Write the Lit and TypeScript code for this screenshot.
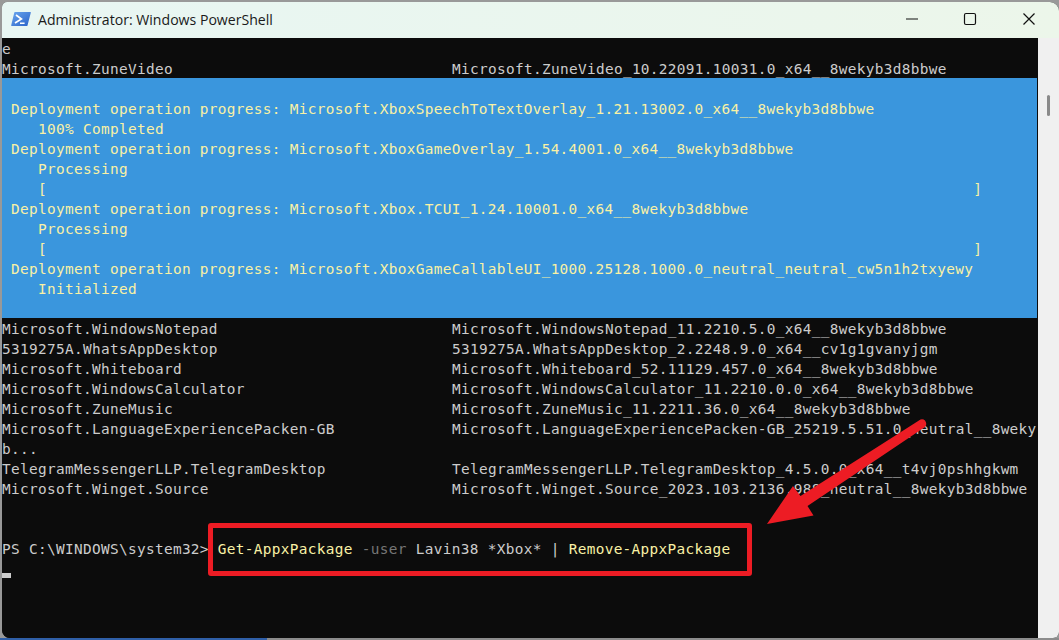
import { LitElement, html, css, svg } from "lit";
import { customElement } from "lit/decorators.js";

type Row = [string, string?];

const top: Row[] = [
  ["e"],
  ["Microsoft.ZuneVideo", "Microsoft.ZuneVideo_10.22091.10031.0_x64__8wekyb3d8bbwe"],
];
const bar = "    [" + " ".repeat(103) + "]";
const progress: string[] = [
  "",
  " Deployment operation progress: Microsoft.XboxSpeechToTextOverlay_1.21.13002.0_x64__8wekyb3d8bbwe",
  "    100% Completed",
  " Deployment operation progress: Microsoft.XboxGameOverlay_1.54.4001.0_x64__8wekyb3d8bbwe",
  "    Processing",
  bar,
  " Deployment operation progress: Microsoft.Xbox.TCUI_1.24.10001.0_x64__8wekyb3d8bbwe",
  "    Processing",
  bar,
  " Deployment operation progress: Microsoft.XboxGameCallableUI_1000.25128.1000.0_neutral_neutral_cw5n1h2txyewy",
  "    Initialized",
  "",
];
const rest: Row[] = [
  ["Microsoft.WindowsNotepad", "Microsoft.WindowsNotepad_11.2210.5.0_x64__8wekyb3d8bbwe"],
  ["5319275A.WhatsAppDesktop", "5319275A.WhatsAppDesktop_2.2248.9.0_x64__cv1g1gvanyjgm"],
  ["Microsoft.Whiteboard", "Microsoft.Whiteboard_52.11129.457.0_x64__8wekyb3d8bbwe"],
  ["Microsoft.WindowsCalculator", "Microsoft.WindowsCalculator_11.2210.0.0_x64__8wekyb3d8bbwe"],
  ["Microsoft.ZuneMusic", "Microsoft.ZuneMusic_11.2211.36.0_x64__8wekyb3d8bbwe"],
  ["Microsoft.LanguageExperiencePacken-GB", "Microsoft.LanguageExperiencePacken-GB_25219.5.51.0_neutral__8wekyb3d8bbwe"],
  ["b..."],
  ["TelegramMessengerLLP.TelegramDesktop", "TelegramMessengerLLP.TelegramDesktop_4.5.0.0_x64__t4vj0pshhgkwm"],
  ["Microsoft.Winget.Source", "Microsoft.Winget.Source_2023.103.2136.988_neutral__8wekyb3d8bbwe"],
  [""],
  [""],
];

@customElement("app-root")
export class AppRoot extends LitElement {
  static styles = css`
    :host {
      display: block;
      width: 1059px;
      height: 640px;
      overflow: hidden;
      background: linear-gradient(90deg, #2f5fa8 267px, #8c8c8c 267px) left bottom / 100% 2px no-repeat, #999999;
    }
    .win {
      position: relative;
      height: 636px;
      margin: 2px 0 0 2px;
      border-top-right-radius: 9px;
      border-bottom-right-radius: 6px;
      border-bottom-left-radius: 8px;
      border-top-left-radius: 5px;
      overflow: hidden;
      display: flex;
      flex-direction: column;
      background: #0c0c0c;
    }
    .title {
      flex: 0 0 36px;
      display: flex;
      align-items: center;
      background: linear-gradient(90deg, #e8f6f3, #ecf6ea);
    }
    .ps-icon {
      width: 20px;
      height: 16px;
      margin: 0 7px 2px 9px;
      flex: none;
    }
    .name {
      font: 14.1px/20px "Open Sans", "Noto Sans", sans-serif;
      color: #1a1a1a;
      white-space: nowrap;
    }
    .controls {
      margin: 0 1px 0 auto;
      display: flex;
      align-items: center;
      height: 100%;
    }
    .ctl {
      width: 58.5px;
      height: 100%;
      display: flex;
      align-items: center;
      justify-content: center;
    }
    .ctl svg {
      width: 14px;
      height: 14px;
      margin-bottom: 2px;
    }
    .body {
      flex: 1;
      display: flex;
      min-height: 0;
    }
    .term {
      flex: 1;
      min-width: 0;
      margin-right: 1px;
      overflow: hidden;
      font: 14.4px/22px "DejaVu Sans Mono", "Liberation Mono", monospace;
      letter-spacing: 0.33px;
      color: #cccccc;
      background: #0c0c0c;
    }
    .row {
      display: flex;
      height: 20px;
      white-space: pre;
    }
    .line {
      height: 20px;
      white-space: pre;
    }
    .col {
      flex: 0 0 450px;
    }
    .blue {
      background: #3a96dd;
      color: #f9f1a5;
    }
    .y { color: #f9f1a5; }
    .g { color: #767676; }
    .cursor {
      width: 9px;
      height: 5px;
      margin-top: 15px;
      background: #cccccc;
    }
    .scroll {
      flex: 0 0 21px;
      background: #f0f0f0;
      position: relative;
    }
    .thumb {
      position: absolute;
      left: 9px;
      top: 57px;
      width: 3px;
      height: 21px;
      border-radius: 2px;
      background: #8a8a8a;
    }
    .box {
      position: absolute;
      left: 206px;
      top: 521px;
      width: 544px;
      height: 53px;
      box-sizing: border-box;
      border: 5px solid #ed1c24;
      border-radius: 3px;
    }
    .arrow {
      position: absolute;
      left: -2px;
      top: -2px;
      width: 1059px;
      height: 640px;
      pointer-events: none;
    }
  `;

  private renderRow(r: Row) {
    return html`<div class="row"><span class="col">${r[0]}</span>${r[1] ? html`<span>${r[1]}</span>` : ""}</div>`;
  }

  render() {
    return html`
      <div class="win">
        <div class="title">
          <svg class="ps-icon" viewBox="0 0 20 16">
            <defs>
              <linearGradient id="p" x1="0" y1="0" x2="1" y2="1">
                <stop offset="0" stop-color="#6aa6ee" />
                <stop offset="1" stop-color="#2a62c8" />
              </linearGradient>
            </defs>
            <path d="M4 1H19.4Q20 1 19.8 1.8L16.5 14.4Q16.3 15 15.6 15H0.7Q0 15 0.2 14.2L3.3 1.6Q3.4 1 4 1Z" fill="url(#p)" />
            <path d="M5 4L10.4 8L4 12" fill="none" stroke="#fff" stroke-width="1.7" />
            <path d="M9 12.2H13.6" fill="none" stroke="#fff" stroke-width="1.6" />
          </svg>
          <span class="name">Administrator: Windows PowerShell</span>
          <div class="controls">
            <div class="ctl">
              <svg viewBox="0 0 14 14"><path d="M1 7H13" stroke="#111" stroke-width="1.2" /></svg>
            </div>
            <div class="ctl">
              <svg viewBox="0 0 14 14"><rect x="1.5" y="1.5" width="11" height="11" rx="1.5" fill="none" stroke="#111" stroke-width="1.2" /></svg>
            </div>
            <div class="ctl">
              <svg viewBox="0 0 14 14"><path d="M1.5 1.5L12.5 12.5M12.5 1.5L1.5 12.5" stroke="#111" stroke-width="1.2" /></svg>
            </div>
          </div>
        </div>
        <div class="body">
          <div class="term">
            ${top.map((r) => this.renderRow(r))}
            <div class="blue">
              ${progress.map((l) => html`<div class="line">${l}</div>`)}
            </div>
            ${rest.map((r) => this.renderRow(r))}
            <div class="line">PS C:\\WINDOWS\\system32&gt; <span class="y">Get-AppxPackage</span> <span class="g">-user</span> Lavin38 *Xbox* | <span class="y">Remove-AppxPackage</span></div>
            <div class="cursor"></div>
          </div>
          <div class="scroll"><div class="thumb"></div></div>
        </div>
        <div class="box"></div>
        <svg class="arrow" viewBox="0 0 1059 640">
          ${svg`<path d="M920.5 419.5Q923 418.5 925 420.5Q927.5 424 925 427L807.5 506L813.5 515.5L767 524L793 486L800.5 496Z" fill="#ed1c24" />`}
        </svg>
      </div>
    `;
  }
}
